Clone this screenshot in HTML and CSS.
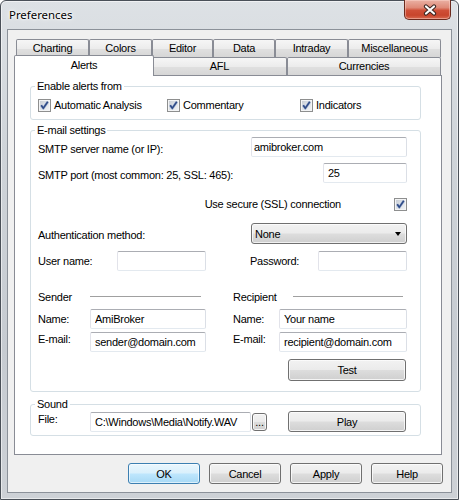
FILE: index.html
```html
<!DOCTYPE html>
<html lang="en">
<head>
<meta charset="utf-8">
<title>Preferences</title>
<link rel="stylesheet" href="styles.css">
</head>
<body>
<div class="window">
  <div class="titlebar">
    <span class="title">Preferences</span>
    <span class="close" aria-label="Close">
      <svg width="14" height="12" viewBox="0 0 14 12"><path d="M3 2.5 L11 9.5 M11 2.5 L3 9.5" stroke="#3a2622" stroke-width="4.2" stroke-linecap="round" fill="none"/><path d="M3 2.5 L11 9.5 M11 2.5 L3 9.5" stroke="#ffffff" stroke-width="2.2" stroke-linecap="round" fill="none"/></svg>
    </span>
  </div>
  <div class="client">
    <div class="tabctl">
      <div class="tabrow row1">
        <div class="tab">Charting</div>
        <div class="tab">Colors</div>
        <div class="tab">Editor</div>
        <div class="tab">Data</div>
        <div class="tab">Intraday</div>
        <div class="tab">Miscellaneous</div>
      </div>
      <div class="tabrow row2">
        <div class="tab sel">Alerts</div>
        <div class="tab">AFL</div>
        <div class="tab">Currencies</div>
      </div>
      <div class="panel">
        <fieldset class="group g-alerts">
          <legend>Enable alerts from</legend>
          <div class="checks">
            <label class="chk"><span class="cb"><svg width="11" height="11" viewBox="0 0 11 11"><path d="M2.2 5.2 L4.3 8.2 L8.8 1.8" stroke="#9fb0d0" stroke-width="2.6" fill="none" stroke-linejoin="round"/><path d="M2.2 5.2 L4.3 8.2 L8.8 1.8" stroke="#2e4a86" stroke-width="1.5" fill="none"/></svg></span>Automatic Analysis</label>
            <label class="chk"><span class="cb"><svg width="11" height="11" viewBox="0 0 11 11"><path d="M2.2 5.2 L4.3 8.2 L8.8 1.8" stroke="#9fb0d0" stroke-width="2.6" fill="none" stroke-linejoin="round"/><path d="M2.2 5.2 L4.3 8.2 L8.8 1.8" stroke="#2e4a86" stroke-width="1.5" fill="none"/></svg></span>Commentary</label>
            <label class="chk"><span class="cb"><svg width="11" height="11" viewBox="0 0 11 11"><path d="M2.2 5.2 L4.3 8.2 L8.8 1.8" stroke="#9fb0d0" stroke-width="2.6" fill="none" stroke-linejoin="round"/><path d="M2.2 5.2 L4.3 8.2 L8.8 1.8" stroke="#2e4a86" stroke-width="1.5" fill="none"/></svg></span>Indicators</label>
          </div>
        </fieldset>

        <fieldset class="group g-mail">
          <legend>E-mail settings</legend>
          <div class="row r1">
            <span class="lbl lo">SMTP server name (or IP):</span>
            <input class="field w156 tight" type="text" value="amibroker.com">
          </div>
          <div class="row r2">
            <span class="lbl lo">SMTP port (most common: 25, SSL: 465):</span>
            <input class="field w84" type="text" value="25">
          </div>
          <div class="row r3">
            <span class="lbl ssl">Use secure (SSL) connection</span>
            <span class="cb"><svg width="11" height="11" viewBox="0 0 11 11"><path d="M2.2 5.2 L4.3 8.2 L8.8 1.8" stroke="#9fb0d0" stroke-width="2.6" fill="none" stroke-linejoin="round"/><path d="M2.2 5.2 L4.3 8.2 L8.8 1.8" stroke="#2e4a86" stroke-width="1.5" fill="none"/></svg></span>
          </div>
          <div class="row r4">
            <span class="lbl lo">Authentication method:</span>
            <div class="combo"><span>None</span><span class="arrow"></span></div>
          </div>
          <div class="row r5">
            <span class="lbl user">User name:</span>
            <input class="field w89" type="text" value="">
            <span class="lbl pass">Password:</span>
            <input class="field w89" type="password" value="">
          </div>
          <div class="row r6">
            <span class="lbl sender">Sender</span>
            <span class="sep s1"></span>
            <span class="lbl recip">Recipient</span>
            <span class="sep s2"></span>
          </div>
          <div class="row r7">
            <span class="lbl c1">Name:</span>
            <input class="field w116" type="text" value="AmiBroker">
            <span class="lbl c3">Name:</span>
            <input class="field w128" type="text" value="Your name">
          </div>
          <div class="row r8">
            <span class="lbl c1 hi">E-mail:</span>
            <input class="field w116" type="text" value="sender@domain.com">
            <span class="lbl c3 hi">E-mail:</span>
            <input class="field w128" type="text" value="recipient@domain.com">
          </div>
          <div class="row r9">
            <button class="btn wide">Test</button>
          </div>
        </fieldset>

        <fieldset class="group g-sound">
          <legend>Sound</legend>
          <div class="row rs">
            <span class="lbl c1 hi">File:</span>
            <input class="field w161" type="text" value="C:\Windows\Media\Notify.WAV">
            <button class="btn dots">...</button>
            <button class="btn wide play">Play</button>
          </div>
        </fieldset>
      </div>
    </div>
    <div class="footer">
      <button class="btn foot default">OK</button>
      <button class="btn foot">Cancel</button>
      <button class="btn foot">Apply</button>
      <button class="btn foot">Help</button>
    </div>
  </div>
</div>
</body>
</html>
```

FILE: styles.css
```css
html {
  background: #ffffff;
}

body {
  margin: 0;
  font-family: "Liberation Sans", Arial, sans-serif;
  font-size: 11px;
  letter-spacing: -0.25px;
  color: #000;
}

.window {
  width: 459px;
  height: 500px;
  box-sizing: border-box;
  border: 1px solid #4a5058;
  border-radius: 6px 6px 0 0;
  background: linear-gradient(180deg, #dde1e5 0%, #cfd4d9 30%, #c6cbd1 70%, #cdd1d6 100%);
  box-shadow: inset 0 0 0 1px rgba(255, 255, 255, 0.55);
  padding: 0 6px 6px 6px;
  display: flex;
  flex-direction: column;
}

.titlebar {
  height: 28px;
  display: flex;
  align-items: flex-start;
}

.title {
  font-family: "Noto Sans", "Liberation Sans", sans-serif;
  font-size: 11.4px;
  letter-spacing: 0;
  line-height: 16px;
  margin: 6px 0 0 2px;
  text-shadow: 0 0 6px #fff, 0 0 3px #fff, 0 0 2px #fff;
}

.close {
  margin: -1px 1px 0 auto;
  width: 47px;
  height: 20px;
  box-sizing: border-box;
  border: 1px solid #6b2a1e;
  border-top: 0;
  border-radius: 0 0 5px 5px;
  background: linear-gradient(180deg, #eab1a4 0%, #df8a78 40%, #cf4f37 55%, #c8452c 80%, #d86a50 100%);
  box-shadow: inset 0 0 0 1px rgba(255, 220, 210, 0.45);
  display: flex;
  align-items: center;
  justify-content: center;
}

.close svg {
  display: block;
  margin-left: 4px;
}

.client {
  flex: 1;
  background: #f0f0f0;
  border: 1px solid #8b9199;
  padding: 9px 8px 8px 6px;
  display: flex;
  flex-direction: column;
}

/* Tabs */
.tabctl {
  width: 428px;
}

.tabrow {
  display: grid;
  height: 18px;
  margin-left: 2px;
}

.row1 {
  grid-template-columns: 73px 63px 61px 62px 73px 93px;
  width: 425px;
}

.row2 {
  grid-template-columns: 136px 135px 154px;
  width: 425px;
}

.tab {
  border: 1px solid #898c95;
  border-bottom: 0;
  border-radius: 2px 2px 0 0;
  background: linear-gradient(180deg, #f6f6f6 0%, #ececec 50%, #e0e0e0 52%, #d6d6d6 100%);
  text-align: center;
  line-height: 17px;
  white-space: nowrap;
}

.tab.sel {
  background: #ffffff;
  margin: -2px -2px -1px -2px;
  line-height: 18px;
  position: relative;
  z-index: 1;
}

.panel {
  background: #ffffff;
  border: 1px solid #898c95;
  padding: 4px 20px 18px 15px;
}

/* Group boxes */
.group {
  border: 1px solid #d5dfe5;
  border-radius: 3px;
  margin: 0;
  padding: 0 13px 0 7px;
  min-width: 0;
}

.group legend {
  padding: 0 2px;
  margin-left: -3px;
  line-height: 13px;
}

.g-alerts {
  padding-top: 6px;
  padding-bottom: 7px;
}

.g-mail {
  margin-top: 4px;
  padding-bottom: 10px;
}

.g-sound {
  margin-top: 6px;
  padding-bottom: 3px;
}

.checks {
  display: grid;
  grid-template-columns: 129px 133px auto;
  height: 13px;
}

.chk {
  display: flex;
  align-items: center;
  gap: 3px;
  line-height: 13px;
  white-space: nowrap;
}

.cb {
  display: block;
  flex: none;
  width: 13px;
  height: 13px;
  box-sizing: border-box;
  border: 1px solid #8e8f8f;
  background: linear-gradient(135deg, #c3c8d0 0%, #dde1e6 45%, #f4f5f6 100%);
  box-shadow: inset 0 0 0 1px #f3f4f5;
}

.cb svg {
  display: block;
}

/* Rows */
.row {
  display: flex;
  align-items: center;
  height: 20px;
  white-space: nowrap;
}

.lbl {
  line-height: 13px;
}

.lbl.lo {
  padding-top: 4px;
}

.lbl.hi {
  padding-bottom: 5px;
}

.r1 input,
.r2 input,
.r4 .combo {
  margin-left: auto;
}

.r2 { margin-top: 6px; }
.r3 { margin-top: 11px; justify-content: flex-end; }
.r4 { margin-top: 9px; height: 21px; }
.r5 { margin-top: 7px; }
.r6 { margin-top: 19px; height: 14px; }
.r7 { margin-top: 5px; }
.r8 { margin-top: 3px; }
.r9 { margin-top: 7px; height: 22px; justify-content: flex-end; }
.rs { height: 21px; }

.ssl {
  margin-right: 53px;
}

.user { width: 79px; }
.pass { width: 68px; margin-left: 44px; }
.sender { width: 52px; }
.recip { width: 60px; margin-left: 32px; }
.c1 { width: 52px; }
.c3 { width: 46px; margin-left: 27px; }

.sep {
  height: 0;
  border-top: 1px solid #a0a0a0;
  border-bottom: 1px solid #ffffff;
}

.s1 { width: 111px; }
.s2 { width: 110px; }

/* Text fields */
.field {
  box-sizing: border-box;
  height: 20px;
  margin: 0;
  padding: 0 4px;
  font: inherit;
  letter-spacing: inherit;
  color: #000;
  background: #fff;
  border: 1px solid;
  border-color: #abadb3 #dbdfe6 #e3e9ef #e2e3ea;
  border-radius: 2px;
  outline: none;
}

.field.tight { padding-left: 2px; }

.w156 { width: 156px; }
.w84 { width: 84px; }
.w89 { width: 89px; }
.w116 { width: 116px; }
.w128 { width: 128px; }
.w161 { width: 161px; }

/* Combo */
.combo {
  width: 156px;
  height: 21px;
  box-sizing: border-box;
  border: 1px solid #707070;
  border-radius: 3px;
  background: linear-gradient(180deg, #f2f2f2 0%, #ebebeb 48%, #dddddd 52%, #cfcfcf 100%);
  box-shadow: inset 0 0 0 1px rgba(255, 255, 255, 0.7);
  display: flex;
  align-items: center;
  padding: 0 5px 0 3px;
}

.combo .arrow {
  margin-left: auto;
  width: 0;
  height: 0;
  border-left: 3.5px solid transparent;
  border-right: 3.5px solid transparent;
  border-top: 4px solid #000;
}

/* Buttons */
.btn {
  box-sizing: border-box;
  margin: 0;
  padding: 0;
  font: inherit;
  letter-spacing: inherit;
  color: #000;
  border: 1px solid #707070;
  border-radius: 3px;
  background: linear-gradient(180deg, #f2f2f2 0%, #ebebeb 48%, #dddddd 52%, #cfcfcf 100%);
  box-shadow: inset 0 0 0 1px rgba(252, 252, 252, 0.8);
  text-align: center;
}

.btn.wide {
  width: 118px;
  height: 22px;
  margin-right: 1px;
}

.btn.play {
  height: 21px;
  margin-left: 21px;
}

.btn.dots {
  width: 15px;
  height: 18px;
  margin-left: 1px;
  line-height: 12px;
}

.footer {
  display: flex;
  justify-content: flex-end;
  gap: 9px;
  margin-top: 8px;
}

.btn.foot {
  width: 72px;
  height: 21px;
}

.btn.default {
  border-color: #3c7fb1;
  background: linear-gradient(180deg, #eaf6fd 0%, #d9f0fc 48%, #bee6fd 52%, #a7d9f5 100%);
  box-shadow: inset 0 0 0 1px rgba(255, 255, 255, 0.6);
}
```
